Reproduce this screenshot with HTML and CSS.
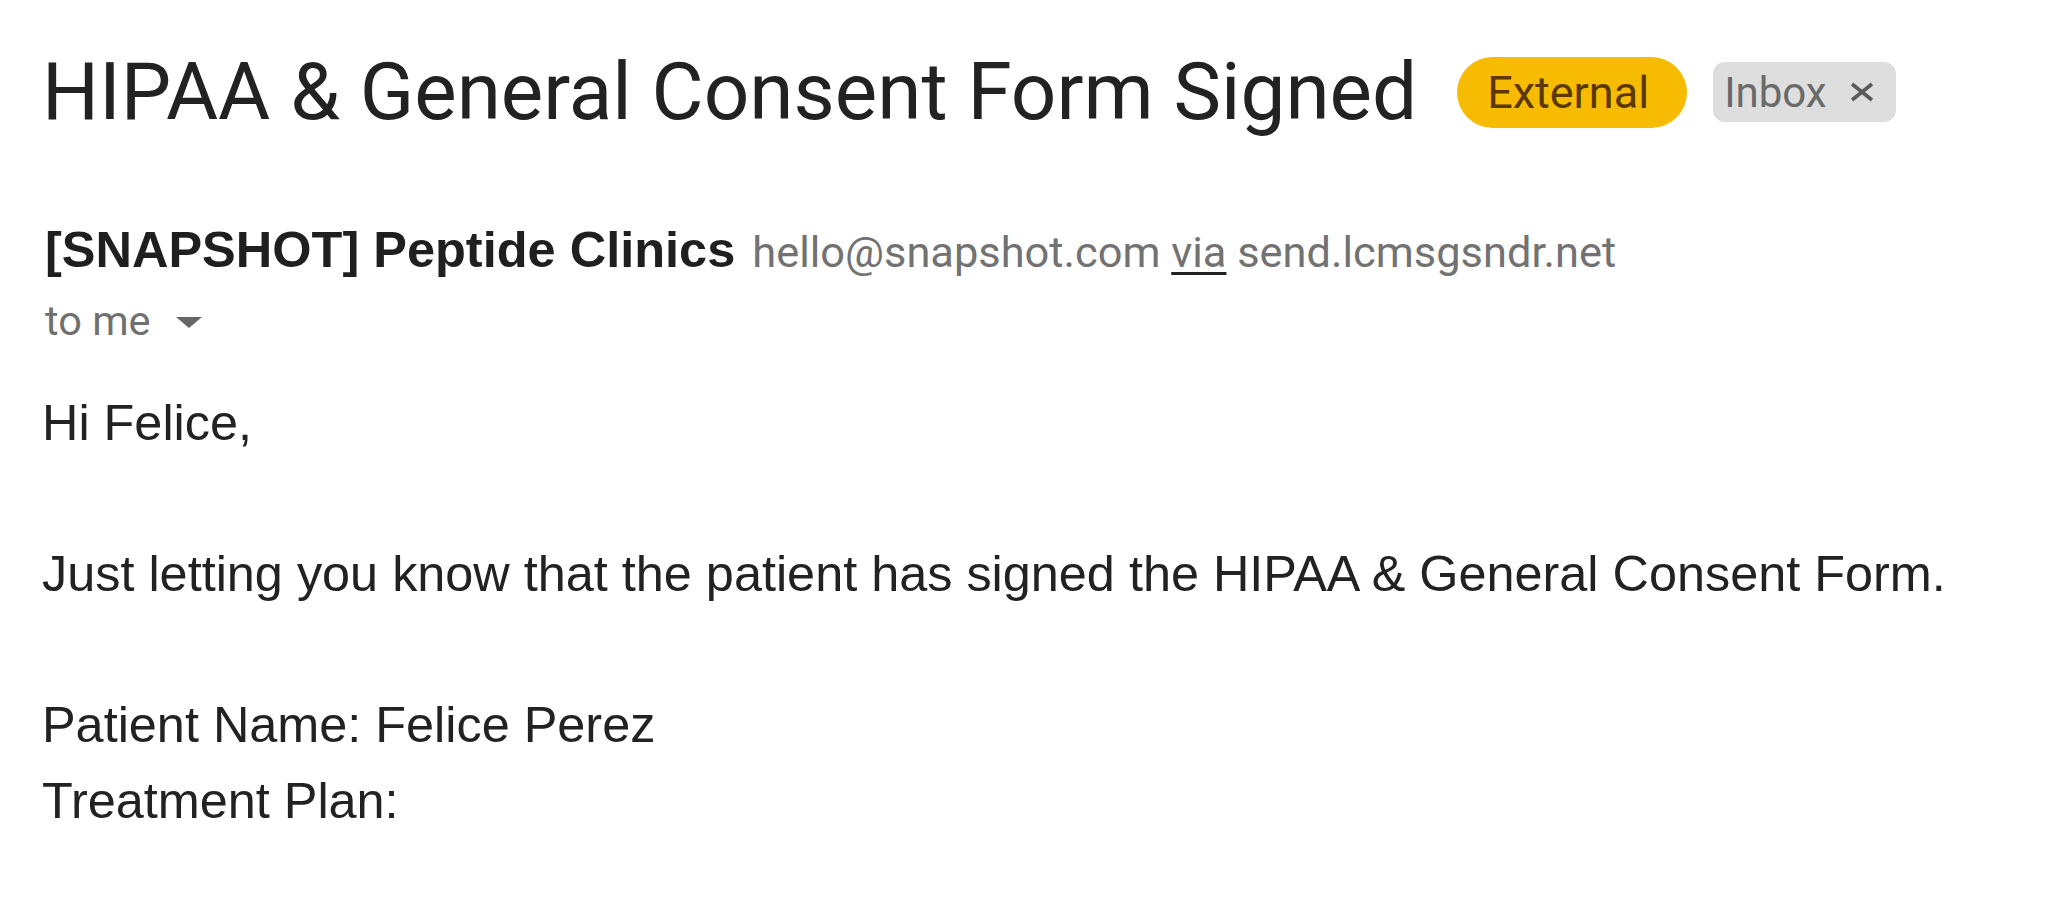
FILE: index.html
```html
<!DOCTYPE html>
<html lang="en">
<head>
<meta charset="utf-8">
<title>HIPAA &amp; General Consent Form Signed</title>
<link rel="stylesheet" href="styles.css">
</head>
<body>
<div class="mail">
  <div class="subject-row">
    <h1 class="subject">HIPAA &amp; General Consent Form Signed</h1>
    <span class="chip chip-external">External</span>
    <span class="chip chip-inbox">Inbox<svg class="chip-x" viewBox="0 0 26 22" width="26" height="22"><path d="M3 3 L23 19 M23 3 L3 19" stroke="#5a5a5a" stroke-width="3.6" fill="none"/></svg></span>
  </div>
  <div class="sender-row"><span class="sender-name">[SNAPSHOT] Peptide Clinics</span><span class="sender-email">hello@snapshot.com <span class="via">via</span> send.lcmsgsndr.net</span></div>
  <div class="to-row">to me<svg class="to-caret" viewBox="0 0 26 11" width="26" height="11"><path d="M0 0 L26 0 L13 11 Z" fill="#666"/></svg></div>
  <div class="message">Hi Felice,<br><br>Just letting you know that the patient has signed the HIPAA &amp; General Consent Form.<br><br>Patient Name: Felice Perez<br>Treatment Plan:</div>
</div>
</body>
</html>
```
FILE: styles.css
```css
html, body { margin: 0; padding: 0; background: #ffffff; }
.mail { padding: 52px 0 0 42px; }
.subject-row { display: flex; align-items: center; height: 80px; }
.subject { margin: 0; font-family: Roboto, "Liberation Sans", sans-serif; font-weight: 400; font-size: 80px; line-height: 80px; color: #222222; white-space: nowrap; }
.chip { display: inline-flex; align-items: center; box-sizing: border-box; white-space: nowrap; font-family: Roboto, "Liberation Sans", sans-serif; }
.chip-external { margin-left: 40px; height: 71px; padding: 0 38px 0 30px; border-radius: 36px; background: #f7bc02; color: #5a3800; font-size: 45px; }
.chip-inbox { margin-left: 26px; height: 60px; padding: 0 21px 0 11px; border-radius: 12px; background: #dedede; color: #6a6a6a; font-size: 42px; }
.chip-x { margin-left: 22px; }
.sender-row { margin-top: 88px; padding-left: 3px; height: 60px; line-height: 60px; white-space: nowrap; font-family: "Liberation Sans", Arial, sans-serif; font-size: 50.5px; }
.sender-name { font-family: "Liberation Sans", Arial, sans-serif; font-weight: 700; font-size: 50.5px; color: #1f1f1f; }
.sender-email { margin-left: 17px; font-family: Roboto, "Liberation Sans", sans-serif; font-size: 43.4px; color: #727272; }
.via { text-decoration: underline; text-decoration-color: #222; text-decoration-thickness: 3px; text-underline-offset: 5px; }
.to-row { margin-top: 16px; padding-left: 3px; height: 50px; line-height: 50px; font-family: Roboto, "Liberation Sans", sans-serif; font-size: 41.5px; color: #707070; display: flex; align-items: center; }
.to-caret { margin-left: 25px; margin-top: 3px; }
.message { margin-top: 39px; font-family: "Liberation Sans", Arial, sans-serif; font-size: 50.4px; line-height: 75.5px; color: #222222; }
```
